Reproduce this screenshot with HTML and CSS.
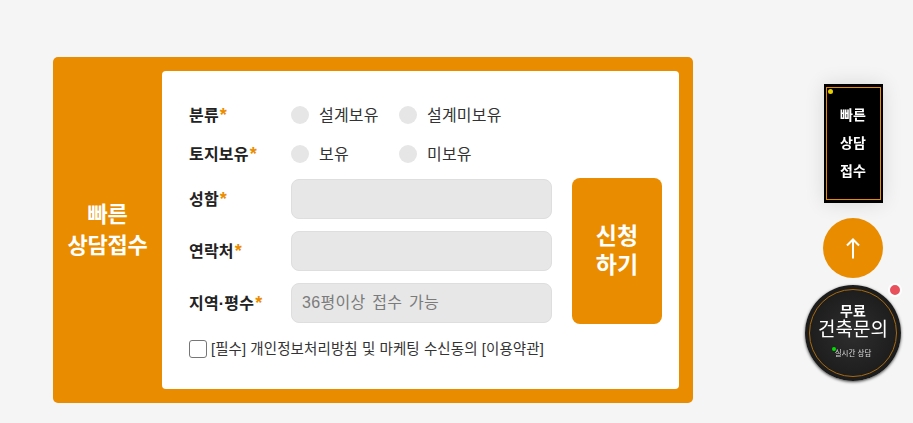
FILE: index.html
```html
<!DOCTYPE html>
<html lang="ko">

<head>
    <meta charset="UTF-8" />
    <meta name="viewport" content="width=device-width, initial-scale=1" />
    <title>빠른 상담접수</title>
    <link rel="stylesheet" href="styles.css">
</head>

<body>
    <div class="quick-form">
        <div class="quick-title">빠른<br>상담접수</div>
        <div class="form-box">
            <div class="form-main">
                <div class="fields">
                    <div class="row radio-row">
                        <div class="label">분류<em>*</em></div>
                        <label class="radio"><i></i>설계보유</label>
                        <label class="radio"><i></i>설계미보유</label>
                    </div>
                    <div class="row radio-row">
                        <div class="label">토지보유<em>*</em></div>
                        <label class="radio"><i></i>보유</label>
                        <label class="radio"><i></i>미보유</label>
                    </div>
                    <div class="row input-row">
                        <div class="label">성함<em>*</em></div>
                        <input type="text" class="text-input">
                    </div>
                    <div class="row input-row">
                        <div class="label">연락처<em>*</em></div>
                        <input type="text" class="text-input">
                    </div>
                    <div class="row input-row">
                        <div class="label">지역·평수<em>*</em></div>
                        <input type="text" class="text-input" placeholder="36평이상 접수 가능">
                    </div>
                </div>
                <button class="submit-btn">신청<br>하기</button>
            </div>
            <label class="agree"><i class="check"></i>[필수] 개인정보처리방침 및 마케팅 수신동의 [이용약관]</label>
        </div>
    </div>

    <div class="side-menu">
        <div class="side-quick">
            <span class="dot"></span>
            빠른<br>상담<br>접수
        </div>
        <div class="top-btn">
            <svg width="14" height="21" viewBox="0 0 14 21">
                <path d="M7 20.500V1.500M1 7.500l6-6 6 6" fill="none" stroke="#fff" stroke-width="2" />
            </svg>
        </div>
        <div class="ask-btn">
            <span class="ask-ring"></span>
            <span class="ask-red"></span>
            <span class="ask-small">무료</span>
            <span class="ask-big">건축문의</span>
            <span class="ask-live"><i></i>실시간 상담</span>
        </div>
    </div>
</body>

</html>
```

FILE: styles.css
```css
body {
    margin: 0;
    background-color: #f5f5f5;
    color: #222;
    font-family: "Liberation Sans", "Noto Sans CJK KR", sans-serif;
}

.quick-form {
    display: flex;
    width: 626px;
    height: 318px;
    margin: 57px 0 0 53px;
    padding: 14px 14px 14px 0;
    background-color: #ea8c00;
    border-radius: 5px;
}

.quick-title {
    display: flex;
    align-items: center;
    justify-content: center;
    width: 109px;
    flex: none;
    color: #fff;
    font-size: 22px;
    font-weight: 700;
    line-height: 31px;
    text-align: center;
    letter-spacing: -0.2px;
}

.form-box {
    flex: 1;
    padding: 24px 17px 0 27px;
    background-color: #fff;
    border-radius: 4px;
}

.form-main {
    display: flex;
    justify-content: space-between;
}

.fields {
    width: 363px;
}

.row {
    display: flex;
    align-items: center;
}

.radio-row {
    height: 39px;
}

.input-row {
    height: 40px;
    margin-bottom: 12px;
}

.radio-row + .input-row {
    margin-top: 6px;
}

.label {
    width: 102px;
    flex: none;
    padding-bottom: 2px;
    color: #222;
    font-size: 16px;
    font-weight: 700;
    letter-spacing: 0.2px;
}

.label em {
    margin-left: 1px;
    color: #ea8c00;
    font-size: 18px;
    font-style: normal;
    line-height: 16px;
}

.radio {
    display: flex;
    align-items: center;
    width: 108px;
    padding-bottom: 2px;
    color: #333;
    font-size: 16px;
    letter-spacing: 0.2px;
}

.radio i {
    width: 18px;
    height: 18px;
    margin: 2px 10px 0 0;
    background-color: #e6e6e6;
    border-radius: 50%;
}

.text-input {
    box-sizing: border-box;
    width: 261px;
    height: 40px;
    padding: 0 10px;
    background-color: #e7e7e7;
    border: 1px solid #dedede;
    border-radius: 8px;
    font-family: inherit;
    font-size: 16px;
    letter-spacing: 0.3px;
    word-spacing: 2px;
    outline: none;
}

.text-input::placeholder {
    color: #7b7b7b;
    opacity: 1;
}

.submit-btn {
    align-self: flex-start;
    width: 90px;
    height: 146px;
    margin-top: 83px;
    padding: 0;
    background-color: #ea8c00;
    color: #fff;
    border: none;
    border-radius: 8px;
    font-family: inherit;
    font-size: 23px;
    font-weight: 700;
    line-height: 29px;
    cursor: pointer;
}

.agree {
    display: flex;
    align-items: center;
    margin-top: 2px;
    color: #333;
    font-size: 14.500px;
    letter-spacing: 0.1px;
}

.check {
    box-sizing: border-box;
    width: 18px;
    height: 18px;
    margin: 2px 4px 0 0;
    background-color: #fff;
    border: 1px solid #767676;
    border-radius: 3px;
}

.side-menu {
    position: fixed;
    top: 84px;
    left: 805px;
    display: flex;
    flex-direction: column;
    align-items: center;
    width: 96px;
}

.side-quick {
    position: relative;
    box-sizing: border-box;
    width: 59px;
    height: 119px;
    padding-top: 17px;
    background-color: #000;
    box-shadow: 0 0 20px rgba(0, 0, 0, 0.12);
    color: #fff;
    font-size: 14px;
    font-weight: 700;
    line-height: 28px;
    text-align: center;
}

.side-quick::after {
    content: "";
    position: absolute;
    top: 3px;
    left: 2px;
    right: 2px;
    bottom: 3px;
    border: 1px solid #ea8c00;
}

.dot {
    position: absolute;
    top: 5px;
    left: 4px;
    width: 5px;
    height: 5px;
    background-color: #e6d000;
    border-radius: 50%;
}

.top-btn {
    display: flex;
    align-items: center;
    justify-content: center;
    width: 60px;
    height: 60px;
    margin-top: 15px;
    background-color: #ea8c00;
    border-radius: 50%;
}

.ask-btn {
    position: relative;
    display: flex;
    flex-direction: column;
    align-items: center;
    box-sizing: border-box;
    width: 96px;
    height: 96px;
    margin-top: 7px;
    padding-top: 18px;
    background: radial-gradient(circle, #2e2e2e, #141414);
    border-radius: 50%;
    box-shadow: 0 1px 3px rgba(0, 0, 0, 0.7);
    color: #fff;
}

.ask-ring {
    position: absolute;
    top: 4px;
    left: 4px;
    right: 4px;
    bottom: 4px;
    border: 1px solid #a86a10;
    border-radius: 50%;
}

.ask-red {
    position: absolute;
    top: -2px;
    right: -1px;
    width: 10px;
    height: 10px;
    background-color: #e8505b;
    border: 2px solid #fff;
    border-radius: 50%;
}

.ask-small {
    font-size: 14px;
    font-weight: 700;
    line-height: 16px;
}

.ask-big {
    font-size: 19px;
    line-height: 21px;
    white-space: nowrap;
}

.ask-live {
    position: relative;
    margin-top: 9px;
    color: #ddd;
    font-size: 7.500px;
    line-height: 10px;
}

.ask-live i {
    position: absolute;
    top: -2px;
    left: -3px;
    width: 4px;
    height: 4px;
    background-color: #00e000;
    border-radius: 50%;
}
```
